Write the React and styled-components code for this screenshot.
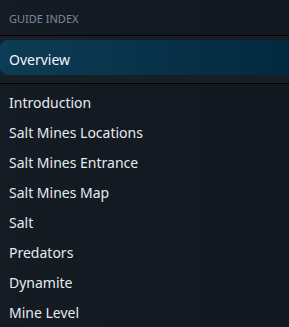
import React from 'react'
import styled, { createGlobalStyle } from 'styled-components'

const GlobalStyle = createGlobalStyle`
    html, body {
        margin: 0;
        padding: 0;
        background: #121921;
    }
`

const items = [
    'Introduction',
    'Salt Mines Locations',
    'Salt Mines Entrance',
    'Salt Mines Map',
    'Salt',
    'Predators',
    'Dynamite',
    'Mine Level',
]

export default function App() {
    return (
        <>
            <GlobalStyle />
            <Panel>
                <Header>Guide Index</Header>
                <ActiveSection>
                    <ActiveItem>Overview</ActiveItem>
                </ActiveSection>
                <List>
                    {items.map(item => <Item key={item}>{item}</Item>)}
                </List>
            </Panel>
        </>
    )
}

const Panel = styled.div`
    width: 289px;
    height: 327px;
    overflow: hidden;
    background: linear-gradient(90deg, #141b23 0%, #111820 100%);
    font-family: "Noto Sans", "Open Sans", sans-serif;
`

const Header = styled.div`
    height: 36px;
    box-sizing: border-box;
    padding: 11px 9px 0;
    font-size: 11px;
    text-transform: uppercase;
    color: #7d8b9b;
    border-bottom: 1px solid #000;
`

const ActiveSection = styled.div`
    padding: 4px 0 8px;
    background: #181e26;
    border-bottom: 1px solid #000;
`

const ActiveItem = styled.div`
    height: 35px;
    box-sizing: border-box;
    display: flex;
    align-items: center;
    padding: 3px 0 0 9px;
    font-size: 14px;
    color: #f2f5f8;
    background: linear-gradient(90deg, #0d3c55 0%, #03293f 100%);
    clip-path: polygon(5px 0, 100% 0, 100% 100%, 5px 100%, 0 calc(100% - 5px), 0 5px);
`

const List = styled.div`
    padding-top: 3px;
`

const Item = styled.div`
    height: 30px;
    box-sizing: border-box;
    display: flex;
    align-items: center;
    padding: 1px 0 0 9px;
    font-size: 14px;
    color: #e6ebf0;
`
